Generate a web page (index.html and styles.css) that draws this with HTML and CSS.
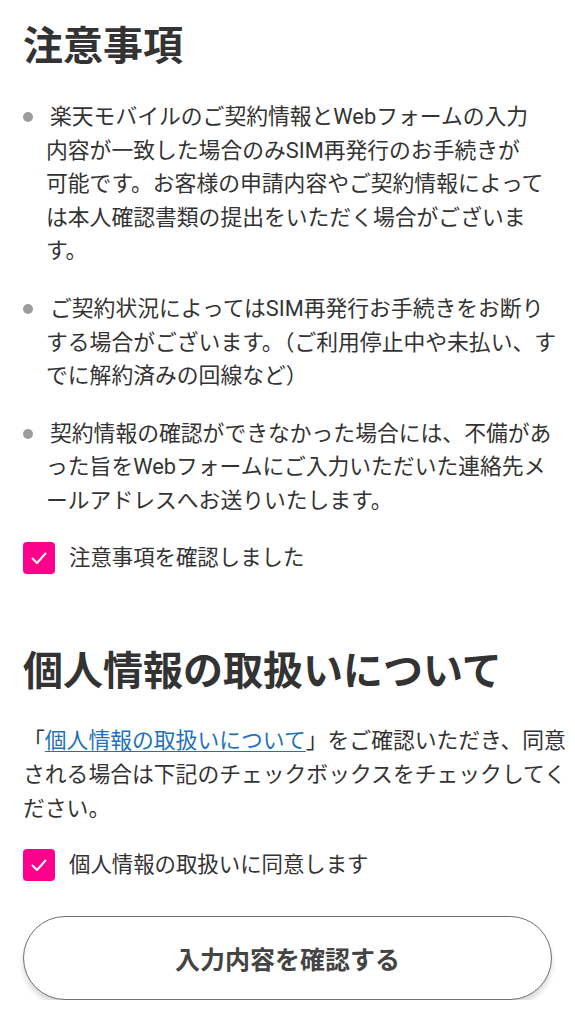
FILE: index.html
```html
<!DOCTYPE html>
<html lang="ja">
<head>
<meta charset="utf-8">
<title>注意事項</title>
<link rel="stylesheet" href="styles.css">
</head>
<body>
<main class="page">
  <section class="section">
    <h1 class="heading">注意事項</h1>
    <ul class="notes">
      <li class="note"><p class="note-text">楽天モバイルのご契約情報とWebフォームの入力<br>内容が一致した場合のみSIM再発行のお手続きが<br>可能です。お客様の申請内容やご契約情報によって<br>は本人確認書類の提出をいただく場合がございま<br>す。</p></li>
      <li class="note"><p class="note-text">ご契約状況によってはSIM再発行お手続きをお断り<br>する場合がございます。（ご利用停止中や未払い、す<br>でに解約済みの回線など）</p></li>
      <li class="note"><p class="note-text">契約情報の確認ができなかった場合には、不備があ<br>った旨をWebフォームにご入力いただいた連絡先メ<br>ールアドレスへお送りいたします。</p></li>
    </ul>
    <label class="check">
      <span class="check-box"><svg viewBox="0 0 32 32" width="32" height="32"><polyline points="9.5,16.5 14,21 22.5,11.5" fill="none" stroke="#fff" stroke-width="2" stroke-linecap="round" stroke-linejoin="round"/></svg></span>
      <span class="check-label">注意事項を確認しました</span>
    </label>
  </section>

  <section class="section section-privacy">
    <h2 class="heading">個人情報の取扱いについて</h2>
    <p class="lead">「<a class="link" href="#">個人情報の取扱いについて</a>」をご確認いただき、同意される場合は下記のチェックボックスをチェックしてください。</p>
    <label class="check check-privacy">
      <span class="check-box"><svg viewBox="0 0 32 32" width="32" height="32"><polyline points="9.5,16.5 14,21 22.5,11.5" fill="none" stroke="#fff" stroke-width="2" stroke-linecap="round" stroke-linejoin="round"/></svg></span>
      <span class="check-label">個人情報の取扱いに同意します</span>
    </label>
  </section>

  <div class="actions">
    <button class="confirm" type="button">入力内容を確認する</button>
  </div>
</main>
</body>
</html>
```

FILE: styles.css
```css
html, body {
  margin: 0;
  padding: 0;
  background: #ffffff;
}

body {
  font-family: Roboto, "Noto Sans CJK JP", "Noto Sans", sans-serif;
  color: #333333;
  font-size: 21.8px;
}

.page {
  padding: 19px 2px 0 23px;
}

.heading {
  margin: 0;
  font-size: 40px;
  line-height: 56px;
  font-weight: 700;
  color: #333333;
}

.notes {
  list-style: none;
  margin: 25px 0 0 0;
  padding: 0;
  display: flex;
  flex-direction: column;
  gap: 24px;
}

.note {
  display: flex;
  align-items: flex-start;
}

.note::before {
  content: "";
  flex: 0 0 10px;
  width: 10px;
  height: 10px;
  margin-top: 12px;
  margin-right: 13px;
  border-radius: 50%;
  background: #9c9c9c;
}

.note-text {
  margin: 0;
  line-height: 33.6px;
  text-indent: 4px;
  white-space: nowrap;
}

.check {
  display: flex;
  align-items: center;
  gap: 14px;
  margin-top: 24px;
  cursor: pointer;
}

.check-box {
  flex: 0 0 32px;
  width: 32px;
  height: 32px;
  border-radius: 4px;
  background: #ff008c;
  display: flex;
}

.check-label {
  font-size: 21.4px;
  line-height: 32px;
  color: #333333;
}

.section-privacy {
  margin-top: 70px;
}

.lead {
  margin: 24px 0 0 0;
  line-height: 34px;
}

.link {
  color: #1f72b8;
  text-decoration: underline;
  text-underline-offset: 3px;
  text-decoration-thickness: 1px;
}

.check-privacy {
  margin-top: 23px;
}

.actions {
  margin-top: 35px;
  padding-right: 21px;
}

.confirm {
  display: block;
  width: 100%;
  height: 84px;
  border: 1.5px solid #6f6f6f;
  border-radius: 42px;
  background: #ffffff;
  box-shadow: 0 5px 5px rgba(0, 0, 0, 0.14);
  font-family: Roboto, "Noto Sans CJK JP", sans-serif;
  font-size: 25px;
  font-weight: 700;
  color: #444444;
  cursor: pointer;
}
```
